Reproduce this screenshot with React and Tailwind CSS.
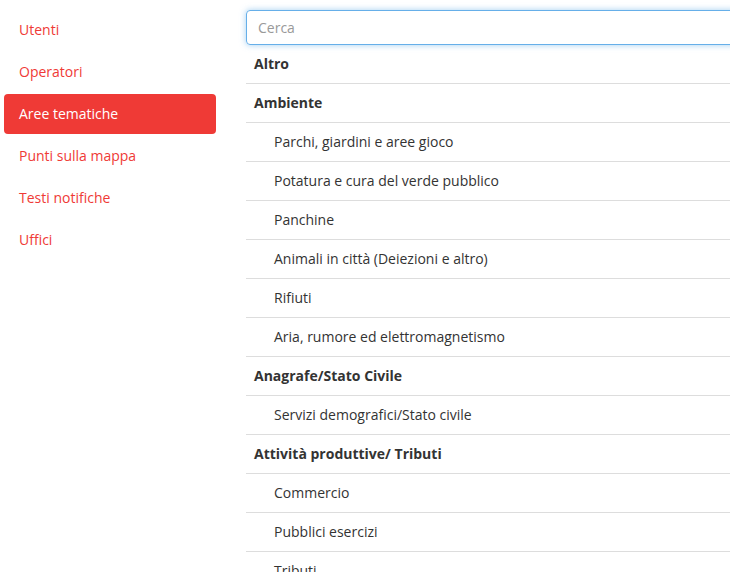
import React, { useState } from "react";

const menu = [
    "Utenti",
    "Operatori",
    "Aree tematiche",
    "Punti sulla mappa",
    "Testi notifiche",
    "Uffici",
];

const rows = [
    { label: "Altro", head: true },
    { label: "Ambiente", head: true },
    { label: "Parchi, giardini e aree gioco" },
    { label: "Potatura e cura del verde pubblico" },
    { label: "Panchine" },
    { label: "Animali in città (Deiezioni e altro)" },
    { label: "Rifiuti" },
    { label: "Aria, rumore ed elettromagnetismo" },
    { label: "Anagrafe/Stato Civile", head: true },
    { label: "Servizi demografici/Stato civile" },
    { label: "Attività produttive/ Tributi", head: true },
    { label: "Commercio" },
    { label: "Pubblici esercizi" },
    { label: "Tributi" },
    { label: "Tasse e imposte" },
];

export default function App() {
    const [active, setActive] = useState("Aree tematiche");
    const [query, setQuery] = useState("");

    return (
        <div className="flex h-[572px] overflow-clip bg-white pl-1 font-['Open_Sans',sans-serif] text-[14px]">
            {/* Sidebar */}
            <nav className="flex w-[212px] shrink-0 flex-col gap-0.5 pt-[10px]">
                {menu.map((m) => (
                    <button
                        key={m}
                        onClick={() => setActive(m)}
                        className={
                            m === active
                                ? "h-10 rounded-[4px] bg-[#ef3a36] pb-[2px] pl-[15px] text-left text-white"
                                : "h-10 rounded-[4px] pb-[2px] pl-[15px] text-left text-[#ef3a36]"
                        }
                    >
                        {m}
                    </button>
                ))}
            </nav>

            {/* Lista */}
            <div className="ml-[30px] w-[520px] shrink-0 pt-[10px]">
                <input
                    autoFocus
                    className="h-[35px] w-full rounded-[4px] border border-[#66afe9] px-[11px] text-[#555] shadow-[0_0_6px_rgba(102,175,233,0.6)] outline-none placeholder:text-[#999]"
                    placeholder="Cerca"
                    value={query}
                    onChange={(e) => setQuery(e.target.value)}
                />
                <ul>
                    {rows
                        .filter((r) =>
                            r.label.toLowerCase().includes(query.toLowerCase())
                        )
                        .map((r) => (
                            <li
                                key={r.label}
                                className={
                                    r.head
                                        ? "flex h-[39px] items-center border-b border-[#ddd] pb-[2px] pl-2 font-bold text-[#333]"
                                        : "flex h-[39px] items-center border-b border-[#ddd] pb-[2px] pl-7 text-[#333]"
                                }
                            >
                                {r.label}
                            </li>
                        ))}
                </ul>
            </div>
        </div>
    );
}
